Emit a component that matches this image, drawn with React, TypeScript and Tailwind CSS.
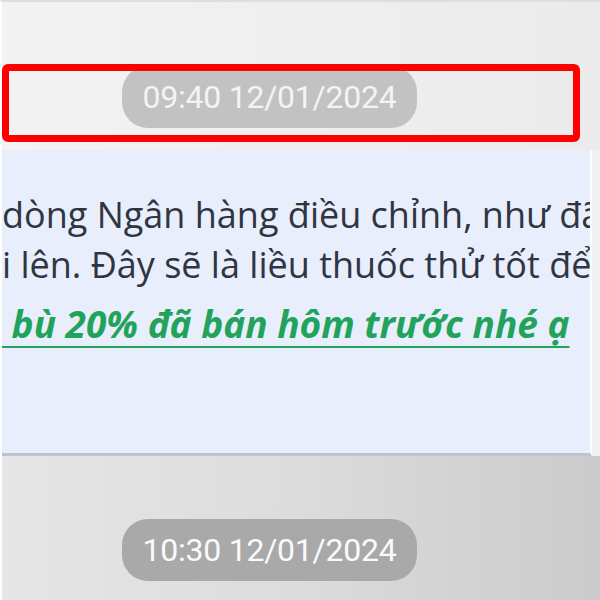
export default function App() {
  return (
    <div className="relative flex h-[600px] w-[600px] flex-col overflow-hidden border-l-2 border-t-2 border-l-white border-t-[#dedede] bg-[#f1f1f1] font-['Roboto',sans-serif]">
      {/* Time row 1 */}
      <div className="h-[148px] shrink-0 bg-gradient-to-r from-[#f3f3f3] to-[#ebebeb] pl-[120px] pt-[64px]">
        <TimePill label="09:40 12/01/2024" className="bg-[#c2c2c2] text-[#f4f4f4]" />
      </div>

      {/* Highlight annotation */}
      <div className="absolute left-0 top-[62px] h-[78px] w-[578px] rounded-[6px] border-[7px] border-[#ff0000]" />

      {/* Message bubble */}
      <div className="h-[306px] w-[590px] shrink-0 overflow-hidden border-b-[3px] border-r-2 border-b-[#bfc3cb] border-r-white/80 bg-[#e8eefc] pt-[40px] font-['Open_Sans',sans-serif] text-[36px] leading-[50px] text-[#2f3541]">
        <p className="whitespace-nowrap">dòng Ngân hàng điều chỉnh, như đã</p>
        <p className="whitespace-nowrap">i lên. Đây sẽ là liều thuốc thử tốt để</p>
        <p className="mt-[9px] whitespace-pre text-[37px] font-bold italic text-[#21a35b] underline decoration-2 underline-offset-[8px]">
          {" bù 20% đã bán hôm trước nhé ạ"}
        </p>
      </div>

      {/* Time row 2 */}
      <div className="flex-1 bg-gradient-to-r from-[#e6e6e6] via-[#dcdcdc] to-[#cbcbcb] pl-[120px] pt-[63px]">
        <TimePill label="10:30 12/01/2024" className="bg-[#a9a9a9] text-[#fafafa]" />
      </div>
    </div>
  );
}

function TimePill({ label, className }: { label: string; className: string }) {
  return (
    <div className={`flex h-[62px] w-[295px] items-center justify-center rounded-[26px] text-[32px] tracking-[-0.25px] ${className}`}>
      {label}
    </div>
  );
}
